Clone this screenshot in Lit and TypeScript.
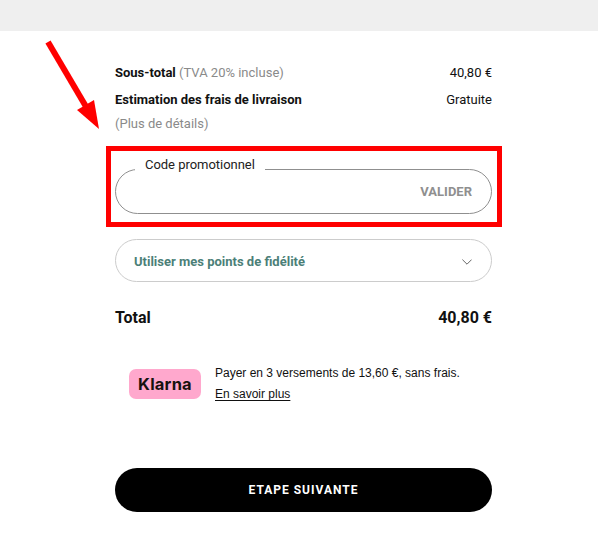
import { LitElement, html, css } from "lit";
import { customElement } from "lit/decorators.js";

@customElement("app-root")
export class AppRoot extends LitElement {
  static styles = css`
    :host { display: block; position: relative; width: 598px; height: 543px; background: #fff; overflow: hidden; font-family: Roboto, "Liberation Sans", sans-serif; color: #111; font-size: 13px; }
    .top { height: 31px; background: #efefef; }
    .main { width: 377px; margin-left: 115px; display: flex; flex-direction: column; }
    .row { display: flex; justify-content: space-between; align-items: center; height: 16px; line-height: 16px; }
    .r1 { margin-top: 34px; }
    .r2 { margin-top: 11px; }
    .r3 { margin-top: 8px; color: #8a8a8a; }
    b { font-weight: 700; color: #111; }
    .muted { color: #8a8a8a; }
    .promo { position: relative; margin-top: 37px; height: 45px; box-sizing: border-box; border: 1px solid #8f8f8f; border-radius: 23px; display: flex; align-items: center; justify-content: flex-end; padding-right: 19px; }
    .promo label { position: absolute; left: 19px; top: -13px; padding: 0 10px; background: #fff; font-size: 13px; letter-spacing: -0.03px; line-height: 16px; color: #222; }
    .valider { font-weight: 700; color: #8f8f8f; font-size: 13px; }
    .points { margin-top: 25px; height: 43px; box-sizing: border-box; border: 1px solid #ccc; border-radius: 22px; display: flex; align-items: center; justify-content: space-between; padding: 0 19px 0 18px; }
    .points span { font-weight: 700; color: #4c7f78; font-size: 13px; position: relative; top: 1px; }
    .points svg { display: block; margin-top: 3px; }
    .total { display: flex; justify-content: space-between; align-items: center; margin-top: 25px; height: 20px; font-size: 16px; font-weight: 700; }
    .klarna { display: flex; align-items: flex-start; gap: 14px; margin-top: 38px; padding-left: 14px; }
    .badge { width: 72px; height: 30px; margin-top: 4px; border-radius: 7px; background: #ffa8cd; color: #17120f; display: flex; align-items: center; justify-content: center; font-family: Inter, sans-serif; font-weight: 700; font-size: 16.5px; letter-spacing: 0.2px; }
    .ktext { display: flex; flex-direction: column; gap: 5px; font-family: "Liberation Sans", Arial, sans-serif; font-size: 12px; line-height: 16px; color: #111; }
    .ktext a { color: #111; text-decoration: underline; text-underline-offset: 2px; }
    .cta { margin-top: 66px; height: 44px; border: 0; border-radius: 22px; background: #000; color: #fff; font-family: Roboto, sans-serif; font-weight: 700; font-size: 12px; letter-spacing: 1px; }
    .redbox { position: absolute; left: 106px; top: 146px; width: 396px; height: 81px; box-sizing: border-box; border: 5px solid #ff0000; pointer-events: none; }
    .arrow { position: absolute; left: 0; top: 0; pointer-events: none; }
  `;

  render() {
    return html`
      <div class="top"></div>
      <div class="main">
        <div class="row r1"><span><b>Sous-total</b> <span class="muted">(TVA 20% incluse)</span></span><span>40,80 €</span></div>
        <div class="row r2"><b>Estimation des frais de livraison</b><span>Gratuite</span></div>
        <div class="row r3">(Plus de détails)</div>
        <div class="promo"><label>Code promotionnel</label><span class="valider">VALIDER</span></div>
        <div class="points"><span>Utiliser mes points de fidélité</span>
          <svg width="10" height="6" viewBox="0 0 10 6"><path d="M0.4 0.6 L5 5.2 L9.6 0.6" fill="none" stroke="#555" stroke-width="0.9"/></svg>
        </div>
        <div class="total"><span>Total</span><span>40,80 €</span></div>
        <div class="klarna">
          <div class="badge">Klarna</div>
          <div class="ktext"><span>Payer en 3 versements de 13,60 €, sans frais.</span><a>En savoir plus</a></div>
        </div>
        <button class="cta">ETAPE SUIVANTE</button>
      </div>
      <div class="redbox"></div>
      <svg class="arrow" width="120" height="140" viewBox="0 0 120 140">
        <path d="M48 42 L88 110" stroke="#ff0000" stroke-width="6" fill="none"/>
        <path d="M99 129 L77 110 L94 100 Z" fill="#ff0000"/>
      </svg>
    `;
  }
}
